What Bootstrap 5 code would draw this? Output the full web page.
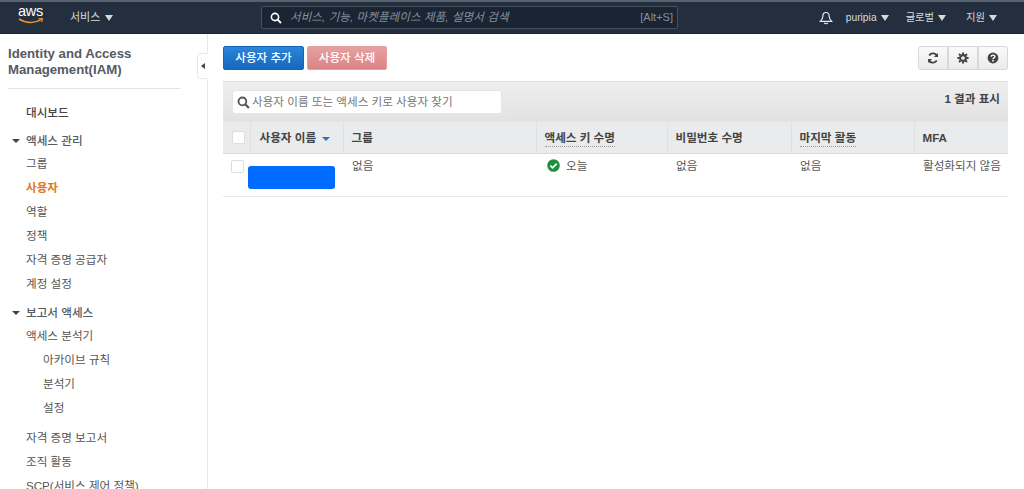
<!DOCTYPE html>
<html lang="ko">
<head>
  <title>IAM 사용자</title>
  <meta charset="utf-8">
  <meta name="viewport" content="width=device-width, initial-scale=1">
  <link href="https://cdn.jsdelivr.net/npm/bootstrap@5.3.3/dist/css/bootstrap.min.css" rel="stylesheet">
  <script src="https://cdn.jsdelivr.net/npm/bootstrap@5.3.3/dist/js/bootstrap.bundle.min.js"></script>
  <style>
    html, body { height: 100%; overflow: hidden; }
    body { font-family: "Liberation Sans", "Noto Sans CJK KR", sans-serif; font-size: 11.6px; color: #444; background: #fff; }

    /* top bar */
    .top-bar { height: 34px; background: #232f3e; border-top: 2px solid #59636f; border-bottom: 1px solid #1b2532; color: #d5dbdb; padding-left: 18px; padding-right: 27px; }
    .aws-logo { width: 26px; height: 23px; color: #fff; font-size: 14.5px; line-height: 13px; letter-spacing: -.3px; margin-top: -2px; }
    .aws-logo svg { display: block; }
    .top-menu { font-size: 10.3px; color: #d5dbdb; white-space: nowrap; }
    .tri { display: inline-block; width: 0; height: 0; border-left: 4px solid transparent; border-right: 4px solid transparent; border-top: 6px solid #d5dbdb; margin-left: 4px; }
    .svc-menu { margin-left: 26px; width: 191px; font-size: 11px; }
    .svc-menu .tri { border-left-width: 4.5px; border-right-width: 4.5px; margin-left: 5px; }
    .top-search { width: 417px; height: 23px; background: #1a2433; border: 1px solid #46505c; border-radius: 2px; padding: 0 4px 0 8px; }
    .top-search em { font-size: 11.5px; letter-spacing: .1px; color: #87919c; margin-left: 8px; white-space: nowrap; }
    .top-search span { font-size: 11px; color: #87919c; }
    .bell-box { margin-right: 13px; }
    .user-menu { margin-right: 20px; }
    .user-menu.name-menu { margin-right: 17px; }

    /* sidebar */
    .side-col { width: 208px; flex: none; border-right: 1px solid #e6e8e8; position: relative; padding: 12px 27px 0 8px; color: #555; }
    .side-title { font-size: 13.2px; font-weight: 700; color: #545b64; line-height: 16px; padding-bottom: 10px; border-bottom: 1px solid #e1e4e4; width: 172px; margin-top: 0; margin-bottom: 0; white-space: nowrap; }
    .side-link { display: block; height: 24px; line-height: 24px; padding-left: 18px; color: #555; text-decoration: none; white-space: nowrap; }
    .side-link.sub { padding-left: 35px; }
    .side-link.on { color: #dd7722; font-weight: 700; }
    .side-link.gap-top { margin-top: 6px; }
    .side-head { display: flex; align-items: center; height: 23px; color: #545b64; font-weight: 500; white-space: nowrap; }
    .side-head.gap-top { margin-top: 5px; }
    .side-head i { width: 0; height: 0; border-left: 4px solid transparent; border-right: 4px solid transparent; border-top: 4px solid #444; margin-left: 4px; margin-right: 6px; }
    .side-dash { display: block; padding-left: 18px; margin-top: 12px; margin-bottom: 4px; height: 24px; line-height: 24px; font-weight: 500; color: #444; text-decoration: none; }
    .side-tab { position: absolute; right: -1px; top: 19px; width: 11px; height: 26px; background: #fff; border: 1px solid #e6e8e8; border-right-color: #fff; border-radius: 4px 0 0 4px; display: flex; align-items: center; justify-content: center; }
    .side-tab i { width: 0; height: 0; border-top: 3.5px solid transparent; border-bottom: 3.5px solid transparent; border-right: 4px solid #444; }

    /* main */
    .main-col { padding: 12px 16px 0 15px; }
    .act-row { gap: 3px; }
    .act-btn { height: 24px; width: 81px; padding: 0; font-size: 11.6px; font-weight: 500; color: #fff; border-radius: 2px; border: 1px solid #1166bb; background: linear-gradient(#2d84d8, #1568bd); }
    .act-btn.off { width: 80px; border-color: #e4a0a0; background: linear-gradient(#e6a0a0, #da8585); }
    .tool-btn { height: 24px; width: 30px; padding: 0; border: 1px solid #d8d8d8; background: linear-gradient(#fafafa, #ebebeb); border-radius: 0; display: flex; align-items: center; justify-content: center; }
    .tool-btn:first-child { border-radius: 3px 0 0 3px; }
    .tool-btn:last-child { border-radius: 0 3px 3px 0; }
    .filter-bar { height: 41px; margin-top: 11px; background: linear-gradient(#eeeeee, #e2e2e2); border-top: 1px solid #dedede; padding: 8px 8px 0 9px; }
    .filter-box { width: 270px; height: 24px; background: #fff; border: 1px solid #e4e4e4; border-radius: 3px; padding-left: 4px; color: #777; }
    .filter-box span { margin-left: 2px; white-space: nowrap; }
    .result-txt { font-weight: 700; color: #444; margin-top: 0; }

    .user-table { table-layout: fixed; width: 785px; margin: 0; font-size: 11.6px; color: #555; border-collapse: collapse; }
    .user-table th { height: 31px; background: #e9ebec; border-bottom: 1px solid #dcdcdc; border-left: 1px solid #dfe1e2; padding: 0 8px; font-weight: 700; color: #444; vertical-align: middle; white-space: nowrap; }
    .user-table th:first-child { border-left: 0; width: 27px; padding: 0 0 0 9px; }
    .user-table th:nth-child(2) { width: 93px; padding-left: 9px; }
    .user-table th:nth-child(3) { width: 193px; }
    .user-table th:nth-child(4) { width: 131px; }
    .user-table th:nth-child(5) { width: 124px; }
    .user-table th:nth-child(6) { width: 123px; }
    .user-table td { height: 43px; padding: 4px 0 0 9px; border-bottom: 1px solid #e8e8e8; vertical-align: top; line-height: 16px; white-space: nowrap; }
    .user-table td:first-child { padding: 6px 0 0 8px; }
    .user-table td:nth-child(2) { padding: 12px 0 0 0; }
    .dot-line { border-bottom: 1px dotted #999; padding-bottom: 2px; }
    .chk-box { display: block; width: 13px; height: 13px; background: #fff; border: 1px solid #ddd; border-radius: 2px; }
    .name-mask { display: block; width: 87px; height: 23px; margin-left: -2px; background: #006cff; border-radius: 3px; }
    .sort-tri { display: inline-block; width: 0; height: 0; border-left: 4px solid transparent; border-right: 4px solid transparent; border-top: 4px solid #2b72b8; margin-left: 6px; vertical-align: 1px; }
    .key-age { padding-left: 2px; gap: 6px; }
  </style>
</head>
<body class="d-flex flex-column">

  <!-- Top bar -->
  <nav class="top-bar d-flex align-items-center flex-shrink-0">
    <div class="aws-logo">
      aws
      <svg width="26" height="6" viewBox="0 0 26 6"><path d="M1 1 C8 5.5 17 5.5 23 1.6" fill="none" stroke="#ec912d" stroke-width="1.5"/><path d="M20.5 .8 L24.5 .6 L23.6 4" fill="none" stroke="#ec912d" stroke-width="1.2"/></svg>
    </div>
    <div class="svc-menu top-menu">서비스<span class="tri"></span></div>
    <div class="top-search d-flex align-items-center">
      <svg width="12" height="12" viewBox="0 0 12 12"><circle cx="5" cy="5" r="3.6" fill="none" stroke="#fff" stroke-width="1.6"/><path d="M7.6 7.6 L11 11" stroke="#fff" stroke-width="1.9"/></svg>
      <em>서비스, 기능, 마켓플레이스 제품, 설명서 검색</em>
      <span class="ms-auto">[Alt+S]</span>
    </div>
    <div class="ms-auto d-flex align-items-center">
      <svg class="bell-box" width="14" height="14" viewBox="0 0 14 14"><path d="M7 1.5 C4.6 1.5 3.8 3.4 3.8 5.4 C3.8 7.6 2.8 8.8 1.3 10.4 L12.7 10.4 C11.2 8.8 10.2 7.6 10.2 5.4 C10.2 3.4 9.4 1.5 7 1.5 Z" fill="none" stroke="#e8eaea" stroke-width="1.2"/><path d="M5.3 11.6 C5.6 13.2 8.4 13.2 8.7 11.6" fill="none" stroke="#e8eaea" stroke-width="1.1"/></svg>
      <div class="top-menu user-menu name-menu">puripia<span class="tri"></span></div>
      <div class="top-menu user-menu">글로벌<span class="tri"></span></div>
      <div class="top-menu">지원<span class="tri"></span></div>
    </div>
  </nav>

  <div class="d-flex flex-grow-1 overflow-hidden">
    <!-- Sidebar -->
    <aside class="side-col">
      <h1 class="side-title">Identity and Access<br>Management(IAM)</h1>
      <a class="side-dash" href="#">대시보드</a>
      <div class="side-head"><i></i>액세스 관리</div>
      <a class="side-link" href="#">그룹</a>
      <a class="side-link on" href="#">사용자</a>
      <a class="side-link" href="#">역할</a>
      <a class="side-link" href="#">정책</a>
      <a class="side-link" href="#">자격 증명 공급자</a>
      <a class="side-link" href="#">계정 설정</a>
      <div class="side-head gap-top"><i></i>보고서 액세스</div>
      <a class="side-link" href="#">액세스 분석기</a>
      <a class="side-link sub" href="#">아카이브 규칙</a>
      <a class="side-link sub" href="#">분석기</a>
      <a class="side-link sub" href="#">설정</a>
      <a class="side-link gap-top" href="#">자격 증명 보고서</a>
      <a class="side-link" href="#">조직 활동</a>
      <a class="side-link" href="#">SCP(서비스 제어 정책)</a>
      <div class="side-tab"><i></i></div>
    </aside>

    <!-- Main -->
    <main class="main-col flex-grow-1">
      <div class="d-flex">
        <div class="d-flex act-row">
          <button class="btn act-btn" type="button">사용자 추가</button>
          <button class="btn act-btn off" type="button">사용자 삭제</button>
        </div>
        <div class="d-flex ms-auto">
          <button class="btn tool-btn" type="button" aria-label="새로 고침">
            <svg width="12" height="12" viewBox="0 0 12 12"><path d="M10.3 4.6 A4.5 4.5 0 0 0 2.2 3.4" fill="none" stroke="#444" stroke-width="1.8"/><path d="M10.9 1 L10.9 5 L6.9 5 Z" fill="#444"/><path d="M1.7 7.4 A4.5 4.5 0 0 0 9.8 8.6" fill="none" stroke="#444" stroke-width="1.8"/><path d="M1.1 11 L1.1 7 L5.1 7 Z" fill="#444"/></svg>
          </button>
          <button class="btn tool-btn" type="button" aria-label="설정">
            <svg width="12" height="12" viewBox="0 0 12 12"><circle cx="6" cy="6" r="2.9" fill="none" stroke="#444" stroke-width="2.1"/><path d="M6 .4 V2.4 M6 9.6 V11.6 M.4 6 H2.4 M9.6 6 H11.6 M2 2 L3.4 3.4 M8.6 8.6 L10 10 M10 2 L8.6 3.4 M3.4 8.6 L2 10" stroke="#444" stroke-width="2"/></svg>
          </button>
          <button class="btn tool-btn" type="button" aria-label="도움말">
            <svg width="12" height="12" viewBox="0 0 12 12"><circle cx="6" cy="6" r="5.4" fill="#444"/><path d="M4.2 4.7 C4.2 2.6 7.9 2.6 7.9 4.6 C7.9 5.9 6 5.9 6 7.2" fill="none" stroke="#fff" stroke-width="1.4"/><rect x="5.2" y="8" width="1.6" height="1.5" fill="#fff"/></svg>
          </button>
        </div>
      </div>

      <div class="filter-bar d-flex justify-content-between">
        <div class="filter-box d-flex align-items-center">
          <svg width="13" height="13" viewBox="0 0 12 12"><circle cx="5" cy="5" r="3.6" fill="none" stroke="#555" stroke-width="1.7"/><path d="M7.6 7.6 L11 11" stroke="#555" stroke-width="2"/></svg>
          <span>사용자 이름 또는 액세스 키로 사용자 찾기</span>
        </div>
        <div class="result-txt">1 결과 표시</div>
      </div>

      <table class="user-table">
        <thead>
          <tr>
            <th><span class="chk-box"></span></th>
            <th>사용자 이름<span class="sort-tri"></span></th>
            <th>그룹</th>
            <th><span class="dot-line">액세스 키 수명</span></th>
            <th>비밀번호 수명</th>
            <th><span class="dot-line">마지막 활동</span></th>
            <th>MFA</th>
          </tr>
        </thead>
        <tbody>
          <tr>
            <td><span class="chk-box"></span></td>
            <td><span class="name-mask"></span></td>
            <td>없음</td>
            <td>
              <div class="d-flex align-items-center key-age">
                <svg width="13" height="13" viewBox="0 0 13 13"><circle cx="6.5" cy="6.5" r="6.3" fill="#1d8f3c"/><path d="M3.4 6.6 L5.6 8.8 L9.7 4.6" fill="none" stroke="#fff" stroke-width="1.8"/></svg>
                <span>오늘</span>
              </div>
            </td>
            <td>없음</td>
            <td>없음</td>
            <td>활성화되지 않음</td>
          </tr>
        </tbody>
      </table>
    </main>
  </div>

</body>
</html>
